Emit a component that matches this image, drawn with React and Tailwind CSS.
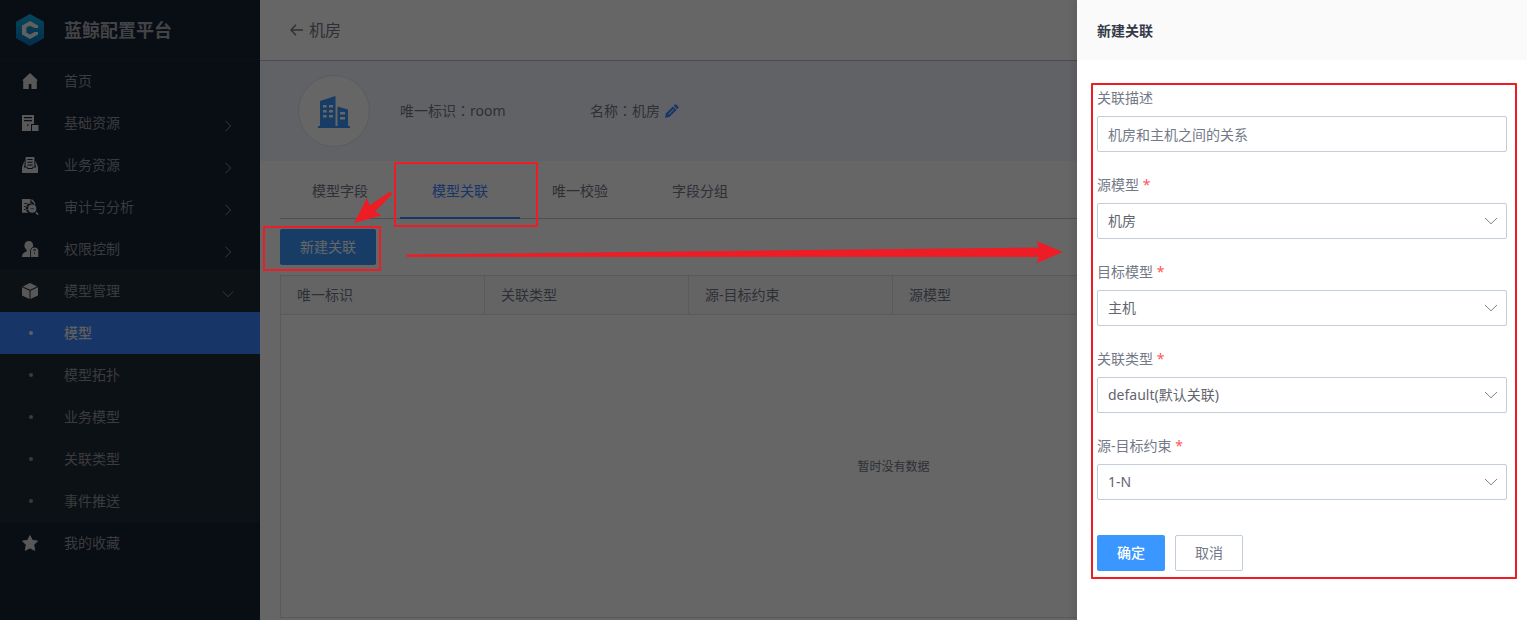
import React from 'react';

const HomeIcon = () => (
  <svg width="16" height="16" viewBox="0 0 16 16" fill="currentColor">
    <path d="M8 0 L16.2 7.6 H14.8 V16 H9.4 V11 H6.8 V16 H1.2 V7.6 H-0.2 Z" />
  </svg>
);
const BasicIcon = () => (
  <svg width="17" height="16" viewBox="0 0 17 16" fill="currentColor">
    <path
      fillRule="evenodd"
      d="M0 0 H12 V9 H9 V16 H0 Z M2 2 V3.2 H10 V2 Z M2 5 V6.2 H10 V5 Z M5 9.4 V10.8 H6.6 V9.4 Z"
    />
    <path d="M10 10 H16.5 V16 H10 Z" />
  </svg>
);
const BusinessIcon = () => (
  <svg width="16" height="16" viewBox="0 0 16 16" fill="currentColor">
    <path d="M2.6 3.4 V8 L1.8 10.6 H4.6 L5.6 12 H10.4 L11.4 10.6 H14.2 L13.4 8 V3.4 L16 10 V16 H0 V10 Z" />
    <path fillRule="evenodd" d="M3.6 0 H12.4 V9.8 H10.9 L10 11.1 H6 L5.1 9.8 H3.6 Z M5.4 2 V3 H10.6 V2 Z M5.4 4.8 V5.8 H10.6 V4.8 Z M5.4 7.6 V8.6 H10.6 V7.6 Z" />
  </svg>
);
const AuditIcon = () => (
  <svg width="17" height="16" viewBox="0 0 17 16" fill="currentColor">
    <path
      fillRule="evenodd"
      d="M0 0 H8.4 V4.8 H11 A5 5 0 0 0 6.4 13.8 H0 Z M2 4.2 V5 H5.6 V4.2 Z M2 7 V7.8 H5.6 V7 Z M2 10 V10.8 H5.6 V10 Z"
    />
    <path d="M9.4 0 C11.8 1.2 13.2 3.2 13.3 6 L12.2 5.4 C11.8 3.8 10.8 2.6 9.4 2.2 Z" />
    <circle cx="10.2" cy="9.7" r="4.1" />
    <path d="M8.4 9.5 H12 V10.1 H8.4 Z" fill="#182132" />
    <path d="M13.8 13.4 L16.2 15.6" stroke="currentColor" strokeWidth="1.5" />
  </svg>
);
const AuthIcon = () => (
  <svg width="17" height="16" viewBox="0 0 17 16" fill="currentColor">
    <path d="M6.8 0 C9.4 0 11.2 1.9 11.2 4.4 C11.2 5 11.1 5.4 10.9 5.9 C9 6.6 8.2 8.2 8.2 10 V16 H0 C0 13.2 1.2 11.8 4.6 10.6 V8.6 C3.2 7.6 2.4 6.2 2.4 4.4 C2.4 1.9 4.2 0 6.8 0 Z" />
    <path
      fillRule="evenodd"
      d="M9 16 V9.8 C9.2 7.8 10.6 6.6 12.6 6.6 C14.6 6.6 16.1 7.8 16.3 9.8 V16 Z M11.2 9.6 H14 C13.9 8.7 13.4 8.2 12.6 8.2 C11.8 8.2 11.3 8.7 11.2 9.6 Z M12.2 11.4 V13 H13 V11.4 Z"
    />
  </svg>
);
const CubeIcon = () => (
  <svg width="16" height="16" viewBox="0 0 16 16" fill="currentColor">
    <path d="M8 0 L15.2 3.4 L8 6.8 L0.8 3.4 Z" />
    <path d="M0 4.2 L7.5 7.8 V16 L0 12.6 Z" />
    <path d="M16 4.2 L8.5 7.8 V16 L16 12.6 Z" />
  </svg>
);
const StarIcon = () => (
  <svg width="16" height="16" viewBox="0 0 16 16" fill="currentColor" stroke="currentColor" strokeLinejoin="round">
    <path d="M8 0.6 L10.3 5.2 L15.6 6 L11.8 9.8 L12.8 15.4 L8 13 L3.2 15.4 L4.2 9.8 L0.4 6 L5.7 5.2 Z" strokeWidth="0.8" />
  </svg>
);

const Chevron = ({ className }) => (
  <svg className={className} width="12" height="12" viewBox="0 0 12 12" fill="none" stroke="currentColor">
    <path d="M3.5 0.8 L8.7 6 L3.5 11.2" />
  </svg>
);

const Logo = () => (
  <svg width="28" height="32" viewBox="0 0 28 32">
    <defs>
      <linearGradient id="logo" x1="0" y1="0" x2="0" y2="1">
        <stop offset="0" stopColor="#0cb0e0" />
        <stop offset="1" stopColor="#0972bd" />
      </linearGradient>
    </defs>
    <path
      d="M14 1 L27 8.3 V23.7 L14 31 L1 23.7 V8.3 Z"
      fill="url(#logo)"
      stroke="url(#logo)"
      strokeWidth="2"
      strokeLinejoin="round"
    />
    <path
      d="M14 7 L22 11.6 V14 H18.6 L14 11.8 L10.4 13.6 V18.4 L14 20.4 L18.6 18 H22 V20.6 L14 25 L6 20.6 V11.6 Z"
      fill="#f0f0f0"
    />
  </svg>
);

const menu = [
  { label: '首页', Icon: HomeIcon },
  { label: '基础资源', Icon: BasicIcon, more: true },
  { label: '业务资源', Icon: BusinessIcon, more: true },
  { label: '审计与分析', Icon: AuditIcon, more: true },
  { label: '权限控制', Icon: AuthIcon, more: true },
];
const children = ['模型', '模型拓扑', '业务模型', '关联类型', '事件推送'];
const tabs = ['模型字段', '模型关联', '唯一校验', '字段分组'];
const columns = ['唯一标识', '关联类型', '源-目标约束', '源模型'];
const selects = [
  { label: '源模型', value: '机房' },
  { label: '目标模型', value: '主机' },
  { label: '关联类型', value: 'default(默认关联)' },
  { label: '源-目标约束', value: '1-N' },
];

function MenuRow({ label, Icon, more }) {
  return (
    <div className="flex h-[42px] items-center pl-[22px] pr-[26px]">
      <span className="w-[42px] text-[#dcdcdc]">
        <Icon />
      </span>
      <span className="flex-1">{label}</span>
      {more && <Chevron className="mt-[5px]" />}
    </div>
  );
}

function Sidebar() {
  return (
    <nav className="h-full w-[260px] shrink-0 bg-[#182132] text-[#90939b]">
      <div className="flex h-[60px] items-center border-b border-[#212a3a] pl-4">
        <Logo />
        <span className="ml-5 text-[18px] font-bold leading-none text-[#a6a9b0]">蓝鲸配置平台</span>
      </div>
      {menu.map((m) => (
        <MenuRow key={m.label} {...m} />
      ))}
      <div className="bg-[#202b38]">
        <div className="flex h-[42px] items-center pl-[22px] pr-[26px]">
          <span className="w-[42px] text-[#dcdcdc]">
            <CubeIcon />
          </span>
          <span className="flex-1">模型管理</span>
          <Chevron className="mt-[5px] rotate-90" />
        </div>
        {children.map((c, i) => (
          <div
            key={c}
            className={
              i === 0
                ? 'flex h-[42px] items-center bg-[#3a84ff] pl-[29px] font-medium text-[#f0f0f0]'
                : 'flex h-[42px] items-center pl-[29px]'
            }
          >
            <span className="mr-[31px] size-1 rounded-full bg-current" />
            {c}
          </div>
        ))}
      </div>
      <MenuRow label="我的收藏" Icon={StarIcon} />
    </nav>
  );
}

const Colon = () => <span className="font-['Noto_Sans_CJK_TC',sans-serif] leading-none">：</span>;

function ModelInfo() {
  return (
    <div className="flex h-[100px] items-center bg-[#f2f5fc] pl-[38px]">
      <div className="flex size-[72px] items-center justify-center rounded-full border border-[#dde4eb] bg-white">
        <svg width="32" height="32" viewBox="0 0 32 32" fill="#3a97ff" className="mt-[2px]">
          <path
            fillRule="evenodd"
            d="M2 5 L17.5 0 V30 H19.5 V10.5 L30 13.5 V30 H32 V32 H0 V30 H2 Z M5 9 V11.5 H8.6 V9 Z M11 9 V11.5 H15 V9 Z M5 14 V16.5 H8.6 V14 Z M11 14 V16.5 H15 V14 Z M5 19 V21.5 H8.6 V19 Z M11 19 V21.5 H15 V19 Z M22 16 V18.4 H27 V16 Z M22 21 V23.4 H27 V21 Z"
          />
        </svg>
      </div>
      <div className="ml-[30px] w-[190px]">
        唯一标识
        <Colon />
        room
      </div>
      <div>
        名称
        <Colon />
        机房
      </div>
      <svg width="14" height="14" viewBox="0 0 14 14" className="ml-[5px]" fill="#3a84ff">
        <path d="M8.7 1.7 L9.9 0.5 Q10.5 0 11.1 0.5 L13.4 2.8 Q14 3.4 13.4 4 L12.2 5.2 Z" />
        <path
          fillRule="evenodd"
          d="M8 2.4 L11.5 5.9 L4.3 13.1 L0 13.8 L0.8 9.6 Z M8.6 4.9 L3.4 10.1 L4 10.7 L9.2 5.5 Z"
        />
      </svg>
    </div>
  );
}

function Main() {
  return (
    <main className="flex h-full min-w-0 flex-1 flex-col bg-white text-[#737987]">
      <header className="flex h-[61px] items-center border-b border-[#b8bec9] pl-[30px] text-base">
        <svg width="13" height="12" viewBox="0 0 13 12" fill="none" stroke="currentColor" strokeWidth="1.6">
          <path d="M6 0.8 L1 6 L6 11.2 M1 6 H13" />
        </svg>
        <span className="ml-[6px]">机房</span>
      </header>
      <ModelInfo />
      <div className="flex flex-1 flex-col px-5">
        <div className="flex h-[58px] border-b border-[#bfc7d0]">
          {tabs.map((t) => (
            <div
              key={t}
              className={
                t === '模型关联'
                  ? '-mb-px flex w-[120px] items-center justify-center border-b-2 border-[#3a84ff] pt-[3px] text-[#3a84ff]'
                  : 'flex w-[120px] items-center justify-center pt-[2px]'
              }
            >
              {t}
            </div>
          ))}
        </div>
        <button className="mt-[10px] h-9 w-24 rounded-xs bg-[#3a97ff] text-white">新建关联</button>
        <div className="mb-[2px] mt-[10px] flex flex-1 flex-col border border-[#dde4eb]">
          <div className="flex h-[39px] items-center border-b border-[#dde4eb] bg-[#fafbfd]">
            {columns.map((c) => (
              <div key={c} className="flex h-full w-[204px] shrink-0 items-center border-r border-[#dde4eb] pl-4">
                {c}
              </div>
            ))}
          </div>
          <div className="flex flex-1 items-center justify-center pt-[2px] text-xs">暂时没有数据</div>
        </div>
      </div>
    </main>
  );
}

function Panel() {
  return (
    <aside className="absolute inset-y-0 right-0 w-[450px] bg-white text-[#737987] shadow-[-4px_0_6px_rgba(0,0,0,0.08)]">
      <h2 className="flex h-[60px] items-center bg-[#fafafa] pl-5 pt-[2px] text-sm font-bold text-[#333948]">新建关联</h2>
      <form className="flex flex-col pl-5 pr-5 pt-[27px]">
        <div className="mb-[15px]">
          <label className="block h-[29px] leading-[22px]">关联描述</label>
          <div className="flex h-9 items-center rounded-xs border border-[#c3cdd7] px-[10px] pt-px">机房和主机之间的关系</div>
        </div>
        {selects.map((s) => (
          <div key={s.label} className="mb-[15px] pt-[7px]">
            <label className="block h-[29px] leading-[22px]">
              {s.label} <span className="text-[#ff5656]">*</span>
            </label>
            <div className="flex h-9 items-center justify-between rounded-xs border border-[#c3cdd7] pl-[10px] pr-[8px] text-[#63656e]">
              {s.value}
              <svg width="14" height="8" viewBox="0 0 14 8" fill="none" stroke="#7c828c">
                <path d="M1 1 L7 6.8 L13 1" />
              </svg>
            </div>
          </div>
        ))}
        <div className="mt-5 flex gap-[10px]">
          <button type="button" className="h-9 w-[68px] rounded-xs bg-[#3a97ff] font-medium text-white">确定</button>
          <button type="button" className="h-9 w-[68px] rounded-xs border border-[#c3cdd7] bg-white">取消</button>
        </div>
      </form>
    </aside>
  );
}

function Annotations() {
  return (
    <div className="pointer-events-none absolute inset-0">
      <div className="absolute left-[394px] top-[162px] h-[65px] w-[144px] rounded-[1px] border-2 border-[#ee1c25]" />
      <div className="absolute left-[263px] top-[226px] h-[45px] w-[118px] rounded-[1px] border-2 border-[#ee1c25]" />
      <div className="absolute left-[1091px] top-[83px] h-[496px] w-[426px] rounded-[1px] border-2 border-[#ee1c25]" />
      <svg className="absolute left-0 top-0" width="1527" height="620" fill="#ee1c25">
        <path d="M354 223.3 L367 198 L369.5 205.5 L388.5 192.8 Q392.5 191 392 194.5 L375 211.5 L381.5 215.3 Z" />
        <path d="M407 254.6 L1039 247.4 L1036.5 241 L1062.8 252 L1036.5 263.2 L1039 257 L407 257 Q405 255.8 407 254.6 Z" />
      </svg>
    </div>
  );
}

export default function App() {
  return (
    <div className="relative flex h-[620px] w-[1527px] overflow-hidden font-['Noto_Sans','Noto_Sans_CJK_SC',sans-serif] text-sm">
      <Sidebar />
      <Main />
      <div className="absolute inset-0 bg-black/60" />
      <Panel />
      <Annotations />
    </div>
  );
}
